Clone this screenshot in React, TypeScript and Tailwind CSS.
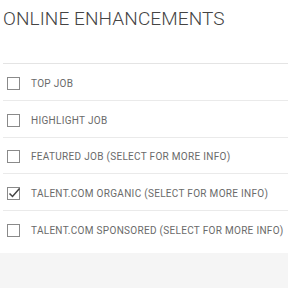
const options = [
  { label: 'Top Job', checked: false },
  { label: 'Highlight Job', checked: false },
  { label: 'Featured Job (select for more info)', checked: false },
  { label: 'Talent.com Organic (select for more info)', checked: true },
  { label: 'Talent.com Sponsored (select for more info)', checked: false },
];

export default function App() {
  return (
    <div className="w-[288px] h-[288px] bg-[#f5f5f5] font-['Roboto',sans-serif] overflow-hidden">
      <div className="bg-white pl-[3px] pt-[7px] pb-[5px]">
        <h2 className="text-[19px] leading-[24px] text-[#444] font-light tracking-[0.1px]">
          ONLINE ENHANCEMENTS
        </h2>
        <div className="h-[33px] border-b border-[#e4e4e4]" />
        {options.map((o, i) => (
          <label
            key={o.label}
            className={`flex items-center gap-[11px] h-[36.75px] pl-1 pt-[3px] ${i < options.length - 1 ? 'border-b border-[#eaeaea]' : ''}`}
          >
            <span className="relative w-[13px] h-[13px] border border-[#8a8a8a] shrink-0">
              {o.checked && (
                <svg viewBox="0 0 14 14" className="absolute left-[-1px] top-[-2px] w-[14px] h-[14px] overflow-visible" fill="none" stroke="#444" strokeWidth="1.5">
                  <path d="M2.5 7.5 L5.5 10.5 L12.5 2.5" />
                </svg>
              )}
            </span>
            <span className="text-[10px] uppercase text-[#6a6a6a] tracking-[0.3px]">{o.label}</span>
          </label>
        ))}
      </div>
    </div>
  );
}
